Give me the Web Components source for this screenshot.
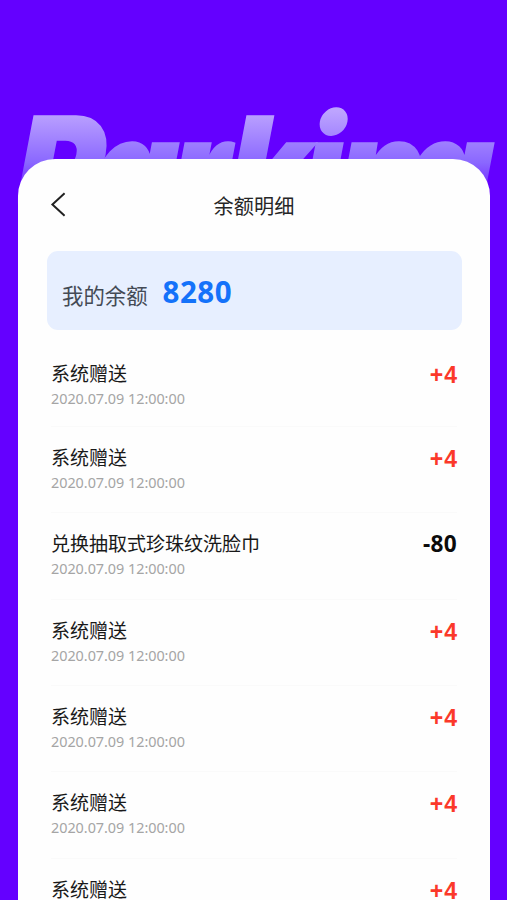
<!DOCTYPE html>
<html lang="zh-CN">
<head>
<meta charset="utf-8">
<title>余额明细</title>
<style>
html,body{margin:0;height:100%}
body{overflow:hidden;background:#6400ff;font-family:"Noto Sans","Noto Sans CJK SC",sans-serif}
</style>
</head>
<body>
<balance-page></balance-page>
<script>
function define(name, html) {
  const t = document.createElement('template');
  t.innerHTML = html;
  customElements.define(name, class extends HTMLElement {
    constructor() {
      super();
      this.attachShadow({mode: 'open'}).append(t.content.cloneNode(true));
    }
  });
}

define('hero-word', `
<style>:host{display:block;height:100%}svg{display:block}</style>
<svg width="507" height="230" viewBox="0 0 507 230">
  <defs><linearGradient id="g" gradientUnits="userSpaceOnUse" x1="0" y1="-113" x2="0" y2="-19">
    <stop offset="0" stop-color="#bda4ff"/><stop offset=".55" stop-color="#8a67ff"/><stop offset="1" stop-color="#6400ff"/>
  </linearGradient></defs>
  <text transform="translate(0 224) skewX(-2.4) scale(.9 1)" x="15 100 188 251 334 373.5 449.5" y="0" font-family="Inter" font-weight="900" font-style="italic" font-size="148" fill="url(#g)" stroke="url(#g)" stroke-width="2">Parking</text>
</svg>`);

define('nav-bar', `
<style>
:host{display:grid;grid-template-columns:1fr auto 1fr;align-items:center;height:92px;padding:0 31px;box-sizing:border-box}
svg{display:block}
h1{margin:0;padding-top:1px;font-weight:400;font-size:20.2px;line-height:30px;color:#262626}
</style>
<svg width="18" height="26" viewBox="0 0 18 26" fill="none" stroke="#222" stroke-width="2"><path d="M15.6 1.2 3.4 12.5 15.6 23.8"/></svg>
<h1><slot></slot></h1><span></span>`);

define('balance-banner', `
<style>
:host{display:flex;align-items:center;gap:15px;height:79px;margin:0 28px 0 29px;padding:0 15px;border-radius:11px;background:#e7efff;box-sizing:border-box}
.label{font-size:21.4px;line-height:30px;color:#444a55;padding-top:11px}
.value{font:700 29.5px/36px "Noto Sans",sans-serif;color:#1472fa;padding-top:3px;letter-spacing:.5px}
</style>
<span class="label"><slot name="label"></slot></span><span class="value"><slot></slot></span>`);

define('record-row', `
<style>
:host{display:flex;justify-content:space-between;align-items:flex-start;height:86.4px;padding-top:17px;box-sizing:border-box;border-bottom:1px solid #fafafa}
.title{font-size:19px;line-height:28px;color:#191919}
.time{font:14.4px/20px "Noto Sans",sans-serif;color:#a5a5a5;margin-top:1px;letter-spacing:-.03px}
.amount{font:700 22.6px/28px "Noto Sans",sans-serif;color:#0b0b0b;letter-spacing:.3px}
:host([gain]) .amount{font:700 23px/30px "Liberation Sans",sans-serif;color:#fb382a;letter-spacing:1px;margin-right:-1px}
</style>
<div><div class="title"><slot></slot></div><div class="time"><slot name="time"></slot></div></div>
<div class="amount"><slot name="amount"></slot></div>`);

define('record-list', `
<style>
:host{display:flex;flex-direction:column;padding:12.8px 33px 0}
::slotted(:first-child){height:84px}
::slotted(*){flex:none}
</style><slot></slot>`);

define('phone-card', `
<style>
:host{display:block;height:741px;margin:159px 17px 0 18px;border-radius:37px 37px 0 0;background:#fefefe;overflow:hidden;position:relative}
</style><slot></slot>`);

const rows = [['系统赠送','+4'],['系统赠送','+4'],['兑换抽取式珍珠纹洗脸巾','-80'],['系统赠送','+4'],['系统赠送','+4'],['系统赠送','+4'],['系统赠送','+4']]
  .map(([t, a]) => `<record-row ${a[0] === '+' ? 'gain' : ''}>${t}<span slot="time">2020.07.09 12:00:00</span><span slot="amount">${a}</span></record-row>`).join('');

define('balance-page', `
<style>
:host{display:grid;height:900px;overflow:hidden;background:#6400ff}
hero-word,phone-card{grid-area:1/1}
hero-word{height:230px}
</style>
<hero-word></hero-word>
<phone-card>
  <nav-bar>余额明细</nav-bar>
  <balance-banner><span slot="label">我的余额</span>8280</balance-banner>
  <record-list>${rows}</record-list>
</phone-card>`);
</script>
</body>
</html>
